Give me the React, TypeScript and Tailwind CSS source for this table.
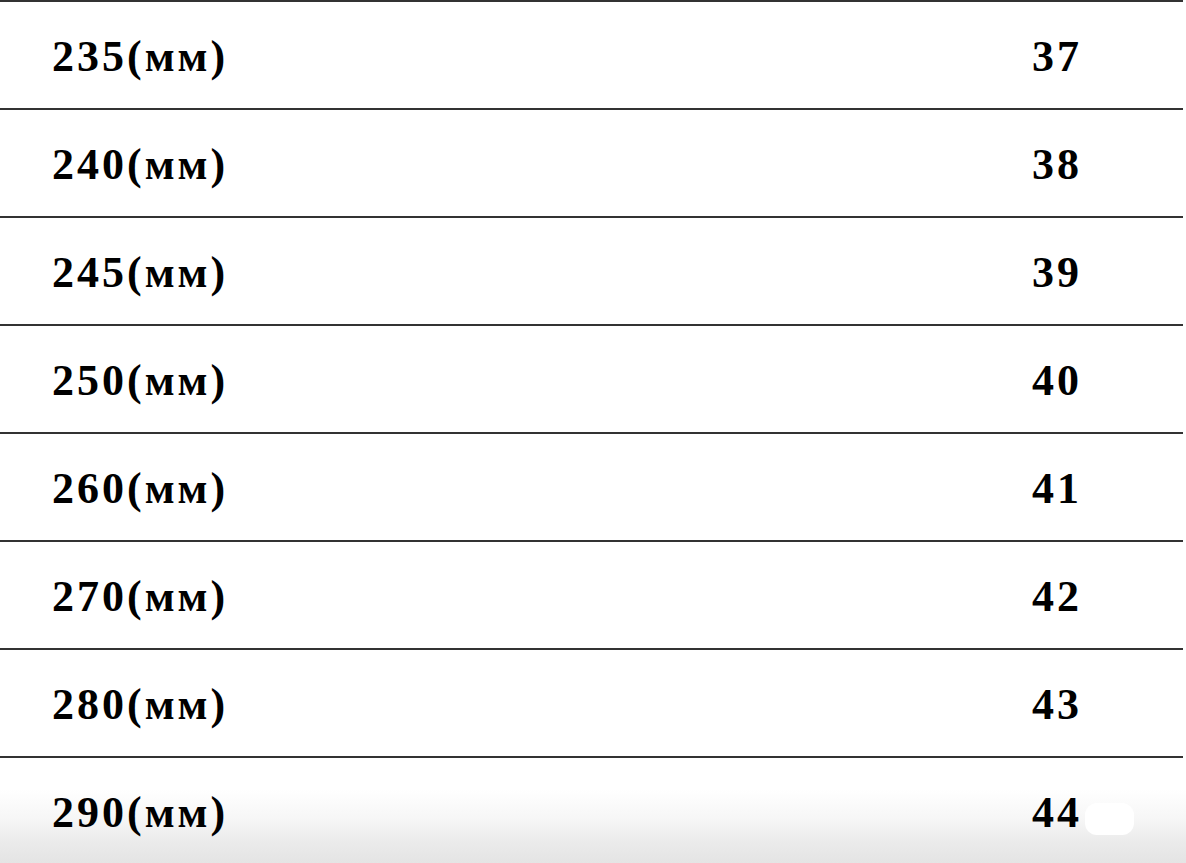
import React from 'react';

const sizes = [
  { mm: '235', eu: '37' },
  { mm: '240', eu: '38' },
  { mm: '245', eu: '39' },
  { mm: '250', eu: '40' },
  { mm: '260', eu: '41' },
  { mm: '270', eu: '42' },
  { mm: '280', eu: '43' },
  { mm: '290', eu: '44' },
];

const App = () => {
  return (
    <div className="relative h-[863px] w-[1186px] overflow-hidden bg-[linear-gradient(to_bottom,#ffffff_0%,#ffffff_91.5%,#f6f6f6_95%,#ebebeb_97.5%,#e4e4e4_100%)] font-['Liberation_Serif',serif] text-black">
      <div className="w-[1183px]">
        {sizes.map((row) => (
          <div key={row.mm} className="flex h-[108px] items-center border-t-2 border-[#333333] pt-[4px]">
            <div className="pl-[52px] text-[44px] font-bold leading-none tracking-[3px]">
              {row.mm}
              <span className="tracking-[3px]">(мм)</span>
            </div>
            <div className="ml-auto mr-[76px] w-[100px] text-center text-[44px] font-bold leading-none tracking-[3px]">
              {row.eu}
            </div>
          </div>
        ))}
      </div>
      <div className="absolute left-[1085px] top-[803px] h-[32px] w-[49px] rounded-[12px] bg-white" />
    </div>
  );
};

export default App;
